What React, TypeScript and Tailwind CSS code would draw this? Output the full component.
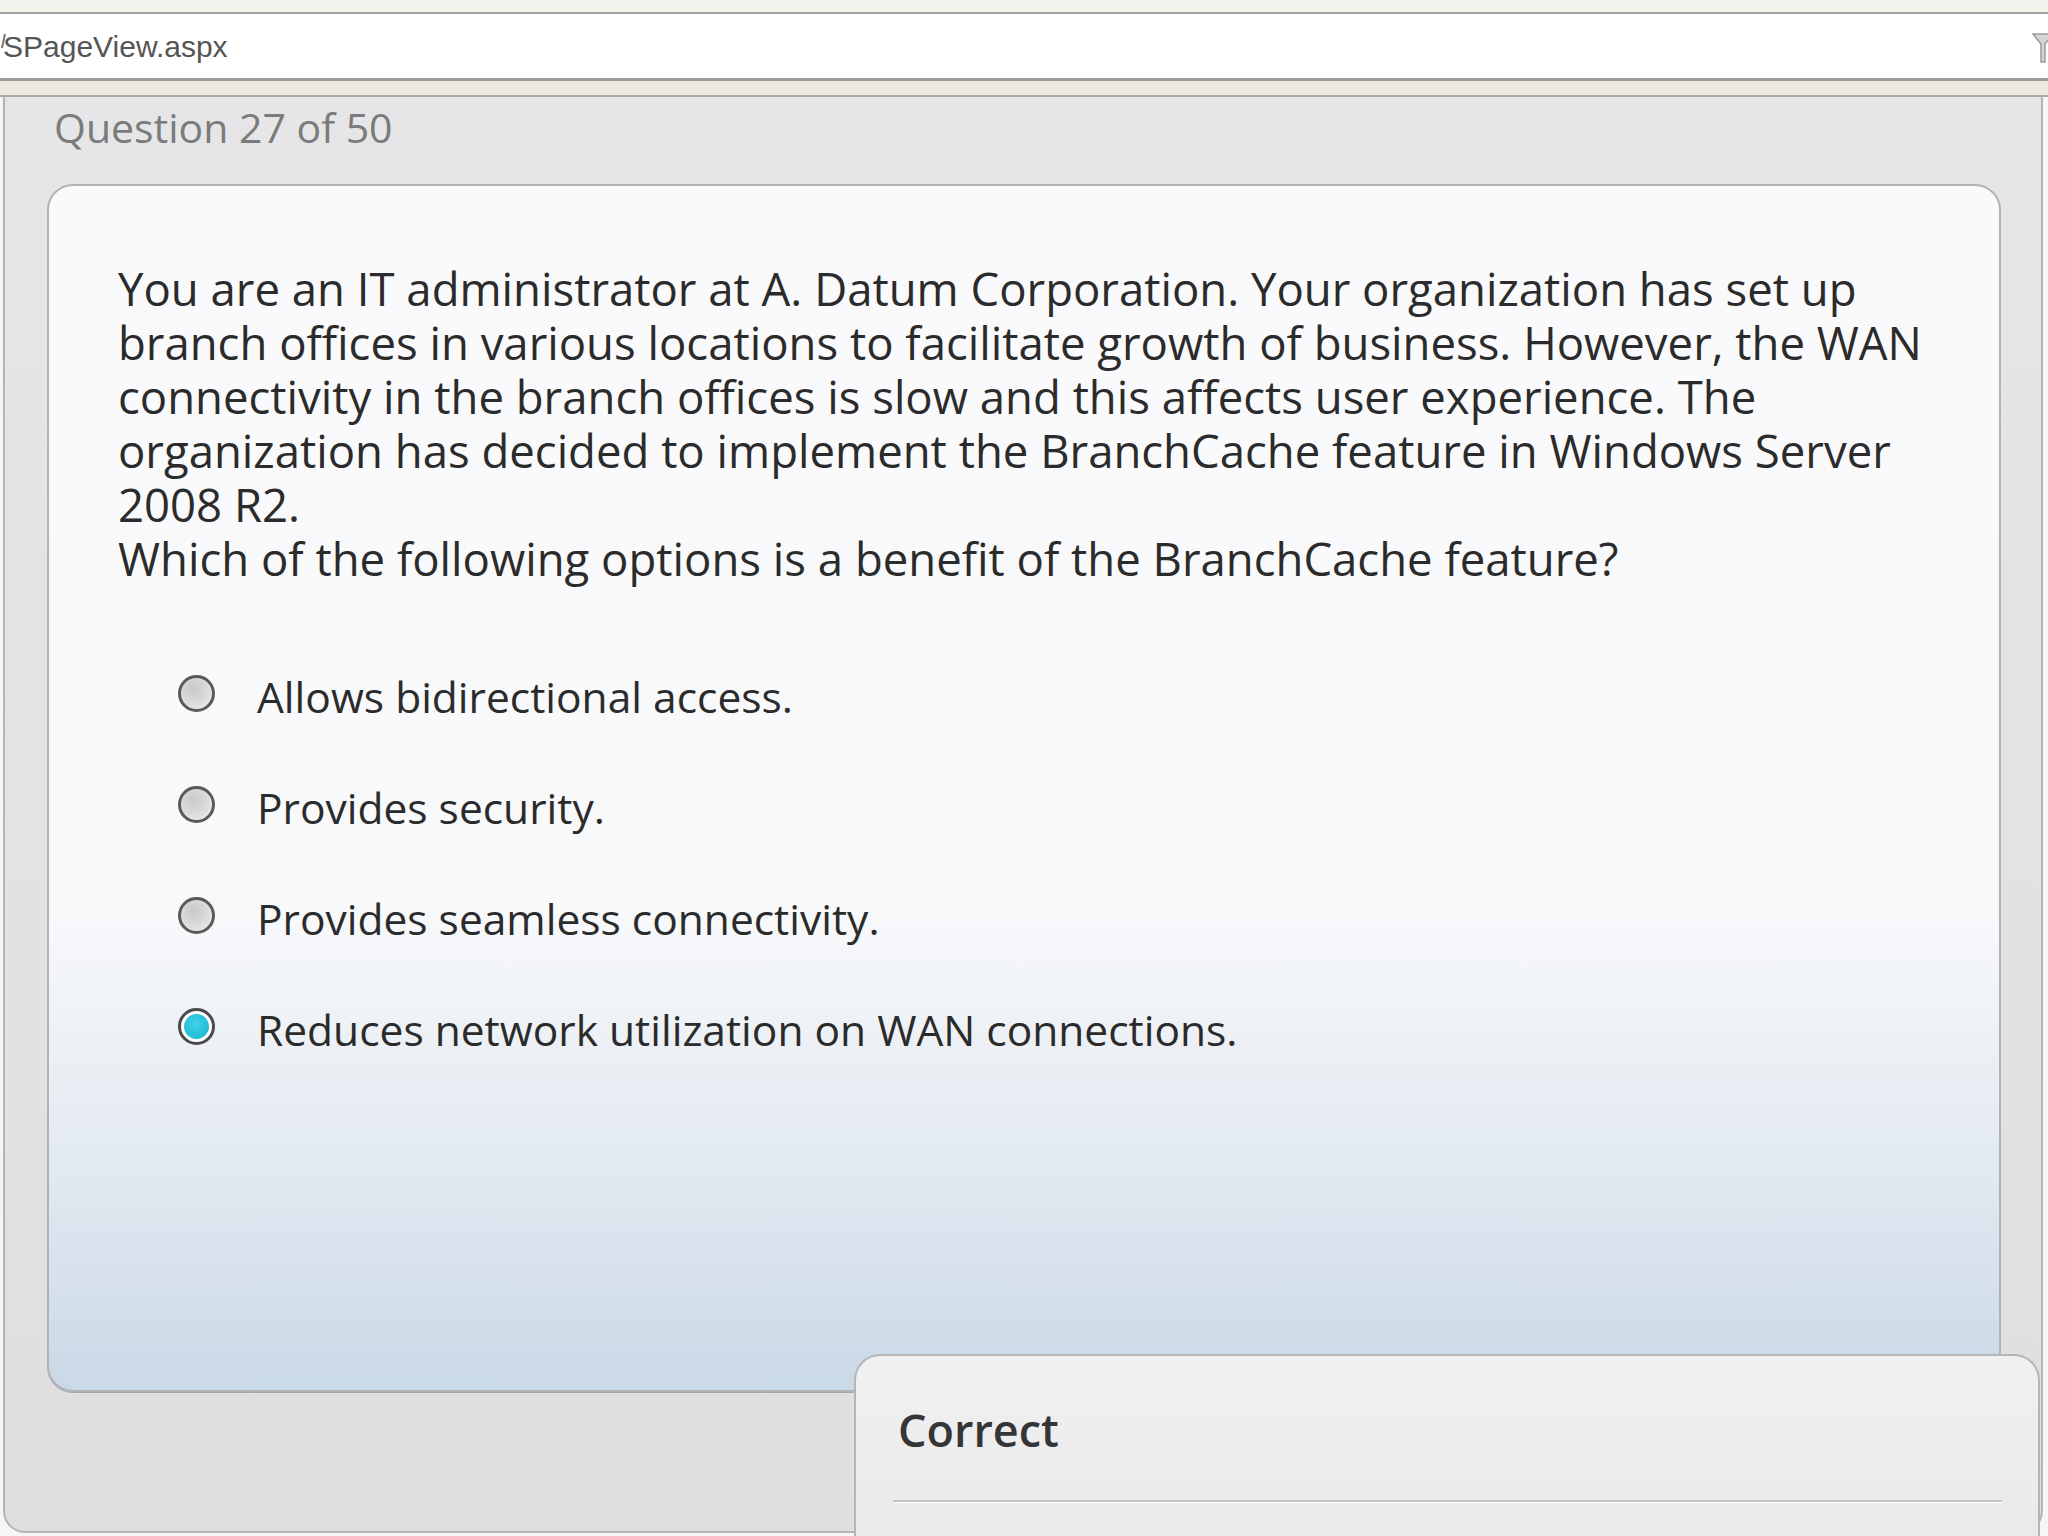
import React from 'react'

const questionLines = [
  'You are an IT administrator at A. Datum Corporation. Your organization has set up',
  'branch offices in various locations to facilitate growth of business. However, the WAN',
  'connectivity in the branch offices is slow and this affects user experience. The',
  'organization has decided to implement the BranchCache feature in Windows Server',
  '2008 R2.',
  'Which of the following options is a benefit of the BranchCache feature?',
]

const options = [
  { id: 'a', label: 'Allows bidirectional access.', checked: false },
  { id: 'b', label: 'Provides security.', checked: false },
  { id: 'c', label: 'Provides seamless connectivity.', checked: false },
  { id: 'd', label: 'Reduces network utilization on WAN connections.', checked: true },
]

function Radio({ checked }: { checked: boolean }) {
  if (checked) {
    return (
      <div className="flex h-[37px] w-[37px] shrink-0 items-center justify-center rounded-full border-[3px] border-[#4a4a4a] bg-white">
        <div className="h-[25px] w-[25px] rounded-full bg-[radial-gradient(circle_at_45%_40%,#3fd0e6_0%,#14b6d3_100%)]" />
      </div>
    )
  }
  return (
    <div className="h-[37px] w-[37px] shrink-0 rounded-full border-[3px] border-[#5a5a5a] bg-[radial-gradient(circle_at_40%_35%,#c9c9c9_0%,#dcdcdc_55%,#f4f4f4_100%)]" />
  )
}

export default function App() {
  return (
    <div className="relative h-[1536px] w-[2048px] overflow-hidden bg-[#f6f6f4] font-['Open_Sans',sans-serif]">
      {/* browser chrome */}
      <div className="h-[12px] bg-[#f4f2ed]" />
      <div className="relative flex h-[69px] items-center overflow-hidden border-t-2 border-b-[3px] border-t-[#a3a3a3] border-b-[#9b9b9b] bg-white">
        <svg className="absolute left-0 top-[19px]" width="6" height="16" viewBox="0 0 6 16">
          <path d="M5 1 L2 15" stroke="#777777" strokeWidth="2" />
        </svg>
        <span className="ml-[3px] font-['Liberation_Sans',Arial,sans-serif] text-[30px] text-[#555555]">
          SPageView.aspx
        </span>
        <svg className="absolute right-[-6px] top-[14px]" width="22" height="40" viewBox="0 0 22 40">
          <path d="M1 6 L21 6 L13 16 L13 34 L9 34 L9 16 Z" fill="#d4d4d4" stroke="#9a9a9a" strokeWidth="1.5" />
        </svg>
      </div>
      <div className="h-[16px] border-b-2 border-[#a9a9a9] bg-[#ece9dc]" />

      {/* main panel */}
      <div className="ml-[3px] h-[1436px] w-[2040px] rounded-b-[22px] border-x-2 border-b-2 border-[#b4b4b6] bg-[linear-gradient(180deg,#e6e6e8_0%,#e2e2e3_60%,#dfdfdf_100%)]">
        <div className="pl-[49px] pt-[6px] text-[41px] leading-[48px] text-[#7b7b7b]">Question 27 of 50</div>

        <div className="ml-[42px] mt-[33px] h-[1208px] w-[1954px] rounded-[26px] border-2 border-[#b2b2b4] bg-[linear-gradient(180deg,#fafafc_0%,#f8f9fb_60%,#e5ebf2_79%,#cad9e7_100%)] shadow-[0_1px_0_#a5a9ae]">
          <p className="pl-[69px] pt-[75px] text-[45.5px] leading-[54px] text-[#2b2b2b]">
            {questionLines.map((line, i) => (
              <React.Fragment key={i}>
                {line}
                {i < questionLines.length - 1 && <br />}
              </React.Fragment>
            ))}
          </p>

          <div className="mt-[53px] pl-[129px]">
            {options.map(opt => (
              <div key={opt.id} className="flex h-[111px] items-center">
                <Radio checked={opt.checked} />
                <span className="ml-[42px] mt-[6px] text-[42.5px] leading-[48px] text-[#2b2b2b]">{opt.label}</span>
              </div>
            ))}
          </div>
        </div>
      </div>

      {/* feedback popup */}
      <div className="absolute left-[854px] top-[1354px] h-[200px] w-[1186px] rounded-t-[26px] border-2 border-b-0 border-[#b5b5b8] bg-[linear-gradient(180deg,#f1f0f1_0%,#e9e9eb_100%)]">
        <div className="pl-[42px] pt-[46px] text-[45px] font-semibold leading-[56px] text-[#353535]">Correct</div>
        <div className="ml-[37px] mr-[36px] mt-[42px] h-[3px] border-t-2 border-[#c4c4c6] bg-white" />
      </div>
    </div>
  )
}
